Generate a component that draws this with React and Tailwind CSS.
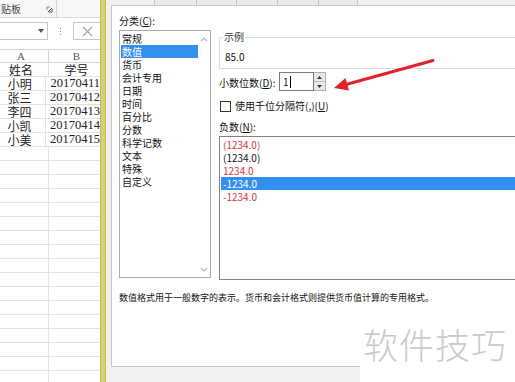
const cats = ['常规', '数值', '货币', '会计专用', '日期', '时间', '百分比', '分数', '科学记数', '文本', '特殊', '自定义']

const negs = [
  { t: '(1234.0)', red: true },
  { t: '(1234.0)' },
  { t: '1234.0', red: true },
  { t: '-1234.0', sel: true },
  { t: '-1234.0', red: true },
]

const people = [
  ['姓名', '学号'],
  ['小明', '20170411'],
  ['张三', '20170412'],
  ['李四', '20170413'],
  ['小凯', '20170414'],
  ['小美', '20170415'],
]

function Sheet() {
  const blanks = Array.from({ length: 18 }, (_, i) => i)
  return (
    <div className="w-[100px] shrink-0 flex flex-col overflow-hidden bg-white">
      <div className="h-[18px] shrink-0 flex bg-[#f7f7f7] border-b border-[#dadada]">
        <div className="w-[57px] flex items-center justify-between border-r border-[#d4d4d4] pr-[3px] overflow-hidden">
          <span className="ml-[-9px] text-[10px] leading-[12px] text-[#444]">剪贴板</span>
          <svg width="7" height="7" viewBox="0 0 7 7" className="mt-[2px]">
            <path d="M1 1h3M1 1v3" stroke="#888" fill="none" />
            <path d="M2 6L6 2M6 6H3M6 6V3" stroke="#555" fill="none" />
          </svg>
        </div>
      </div>
      <div className="h-[32px] shrink-0 flex items-start pt-[4px] border-b border-[#d4d4d4]">
        <div className="w-[48px] h-[18px] border border-l-0 border-[#c6c6c6] flex items-center justify-end pr-[3px]">
          <svg width="6" height="4" viewBox="0 0 6 4">
            <path d="M0 0h6L3 4z" fill="#555" />
          </svg>
        </div>
        <div className="w-[25px] h-[18px] flex flex-col items-center justify-center gap-[2px]">
          <span className="w-[1px] h-[1px] bg-[#888]" />
          <span className="w-[1px] h-[1px] bg-[#888]" />
          <span className="w-[1px] h-[1px] bg-[#888]" />
        </div>
        <div className="flex-1 h-[18px] border border-r-0 border-[#c6c6c6] flex items-center pl-[8px]">
          <svg width="11" height="11" viewBox="0 0 11 11">
            <path d="M1 1l9 9M10 1l-9 9" stroke="#a8a8a8" strokeWidth="1.3" />
          </svg>
        </div>
      </div>
      <div className="h-[13px] shrink-0 flex text-[11px] leading-[13px] text-[#555] font-['Liberation_Serif',serif] border-b border-[#d4d4d4]">
        <div className="w-[49px] pr-[6px] text-center border-r border-[#d4d4d4]">A</div>
        <div className="flex-1 pl-[4px] text-center">B</div>
      </div>
      {people.map(([name, id], i) => (
        <div key={name} className="h-[14px] shrink-0 flex border-b border-[#e2e2e2] text-[12px] leading-[13px] text-[#222]">
          <div className="w-[49px] pr-[6px] text-center border-r border-[#e2e2e2]">{name}</div>
          <div
            className={`flex-1 whitespace-nowrap ${
              i === 0 ? 'pl-[4px] text-center' : "pl-[4px] font-['Liberation_Serif',serif] text-[12.5px]"
            }`}
          >
            {id}
          </div>
        </div>
      ))}
      {blanks.map((b) => (
        <div key={b} className="h-[14px] shrink-0 flex border-b border-[#e2e2e2]">
          <div className="w-[49px] border-r border-[#e2e2e2]" />
        </div>
      ))}
    </div>
  )
}

function Chevron({ down }) {
  return (
    <svg width="8" height="5" viewBox="0 0 8 5">
      <path d={down ? 'M1 1l3 3 3-3' : 'M1 4l3-3 3 3'} stroke="#b5b5b5" fill="none" strokeWidth="1.1" />
    </svg>
  )
}

function Dialog() {
  return (
    <div className="flex-1 flex flex-col bg-[#f0f0f0]">
      <div className="h-[5px] shrink-0 flex pl-[48px]">
        {[42, 40, 41, 41, 40].map((w, i) => (
          <div key={i} style={{ width: w }} className="h-full bg-[#e9e9e9] border-l border-[#c4c4c4] last:border-r" />
        ))}
      </div>
      <div className="pl-[5px]">
        <div className="h-[362px] bg-white border-l border-t border-b border-[#c6c6c6] pl-[7px] pt-[8px]">
          <div className="flex gap-[8px]">
            <div className="w-[92px] shrink-0">
              <p className="leading-[14px]">
                分类(<span className="underline">C</span>):
              </p>
              <div className="mt-[2px] h-[248px] flex border border-[#a9a9a9]">
                <div className="w-[78px] pl-[1px] pt-[1px]">
                  {cats.map((c) => (
                    <div
                      key={c}
                      className={`h-[13px] leading-[13px] pl-[1px] ${c === '数值' ? 'bg-[#3390ee] text-white' : 'text-[#111]'}`}
                    >
                      {c}
                    </div>
                  ))}
                </div>
                <div className="flex-1 flex flex-col items-center justify-between pt-[6px] pb-[5px]">
                  <Chevron />
                  <Chevron down />
                </div>
              </div>
            </div>

            <div className="flex-1 pt-[23px]">
              <div className="relative h-[32px] border-t border-b border-l border-[#dcdcdc] pl-[5px] pt-[13px]">
                <span className="absolute left-[3px] top-[-8px] px-[1px] bg-white leading-[14px] text-[#333]">示例</span>
                <p className="leading-[12px]">85.0</p>
              </div>
              <div className="mt-[3px] h-[19px] flex items-center">
                <span className="w-[60px] leading-[14px] mt-[2px]">
                  小数位数(<span className="underline">D</span>):
                </span>
                <div className="w-[35px] h-[19px] border border-[#7a7a7a] flex items-center pl-[3px]">
                  <span className="leading-[12px] border-r border-black pr-[1px]">1</span>
                </div>
                <div className="w-[12px] h-[19px] flex flex-col border border-l-0 border-[#adadad]">
                  <div className="flex-1 bg-[#e8e8e8] border-b border-[#c0c0c0] flex items-center justify-center">
                    <svg width="5" height="3" viewBox="0 0 5 3">
                      <path d="M0 3h5L2.5 0z" fill="#333" />
                    </svg>
                  </div>
                  <div className="flex-1 bg-[#e8e8e8] flex items-center justify-center">
                    <svg width="5" height="3" viewBox="0 0 5 3">
                      <path d="M0 0h5L2.5 3z" fill="#333" />
                    </svg>
                  </div>
                </div>
              </div>
              <div className="mt-[9px] h-[12px] flex items-center">
                <span className="ml-[1px] w-[11px] h-[11px] border border-[#333] bg-white" />
                <span className="ml-[4px] leading-[12px]">
                  使用千位分隔符(,)(<span className="underline">U</span>)
                </span>
              </div>
              <p className="mt-[8px] leading-[14px]">
                负数(<span className="underline">N</span>):
              </p>
              <div className="mt-[2px] h-[144px] border border-r-0 border-[#828282] pl-[1px] pt-[1px]">
                {negs.map((n, i) => (
                  <div
                    key={i}
                    className={`h-[13px] leading-[13px] pl-[2px] ${
                      n.sel ? 'bg-[#3390ee] text-white' : n.red ? 'text-[#d8343e]' : 'text-[#111]'
                    }`}
                  >
                    {n.t}
                  </div>
                ))}
              </div>
            </div>
          </div>
          <p className="mt-[12px] text-[9px] leading-[12px] text-[#111] whitespace-nowrap">
            数值格式用于一般数字的表示。货币和会计格式则提供货币值计算的专用格式。
          </p>
        </div>
      </div>
    </div>
  )
}

export default function App() {
  return (
    <div className="relative w-[515px] h-[382px] flex overflow-hidden bg-white text-[10px] text-[#111] font-['Noto_Sans_CJK_SC','Noto_Sans',sans-serif]">
      <Sheet />
      <div className="w-[6px] shrink-0 bg-[#d8d173] border-l border-r border-[#c4bb58]" />
      <Dialog />

      <svg className="absolute left-0 top-0 pointer-events-none" width="515" height="382">
        <line x1="433" y1="60.5" x2="346" y2="84.5" stroke="#e0222c" strokeWidth="3" strokeLinecap="round" />
        <polygon points="334,88 349,90.5 345.5,78" fill="#e0222c" />
      </svg>

      <div className="absolute left-[360px] top-[312px] right-0 bottom-0 bg-white flex items-start justify-end pr-[8px] pt-[12px]">
        <span className="text-[35px] leading-[40px] text-[#cacaca] font-light tracking-[1px]">软件技巧</span>
      </div>
    </div>
  )
}
